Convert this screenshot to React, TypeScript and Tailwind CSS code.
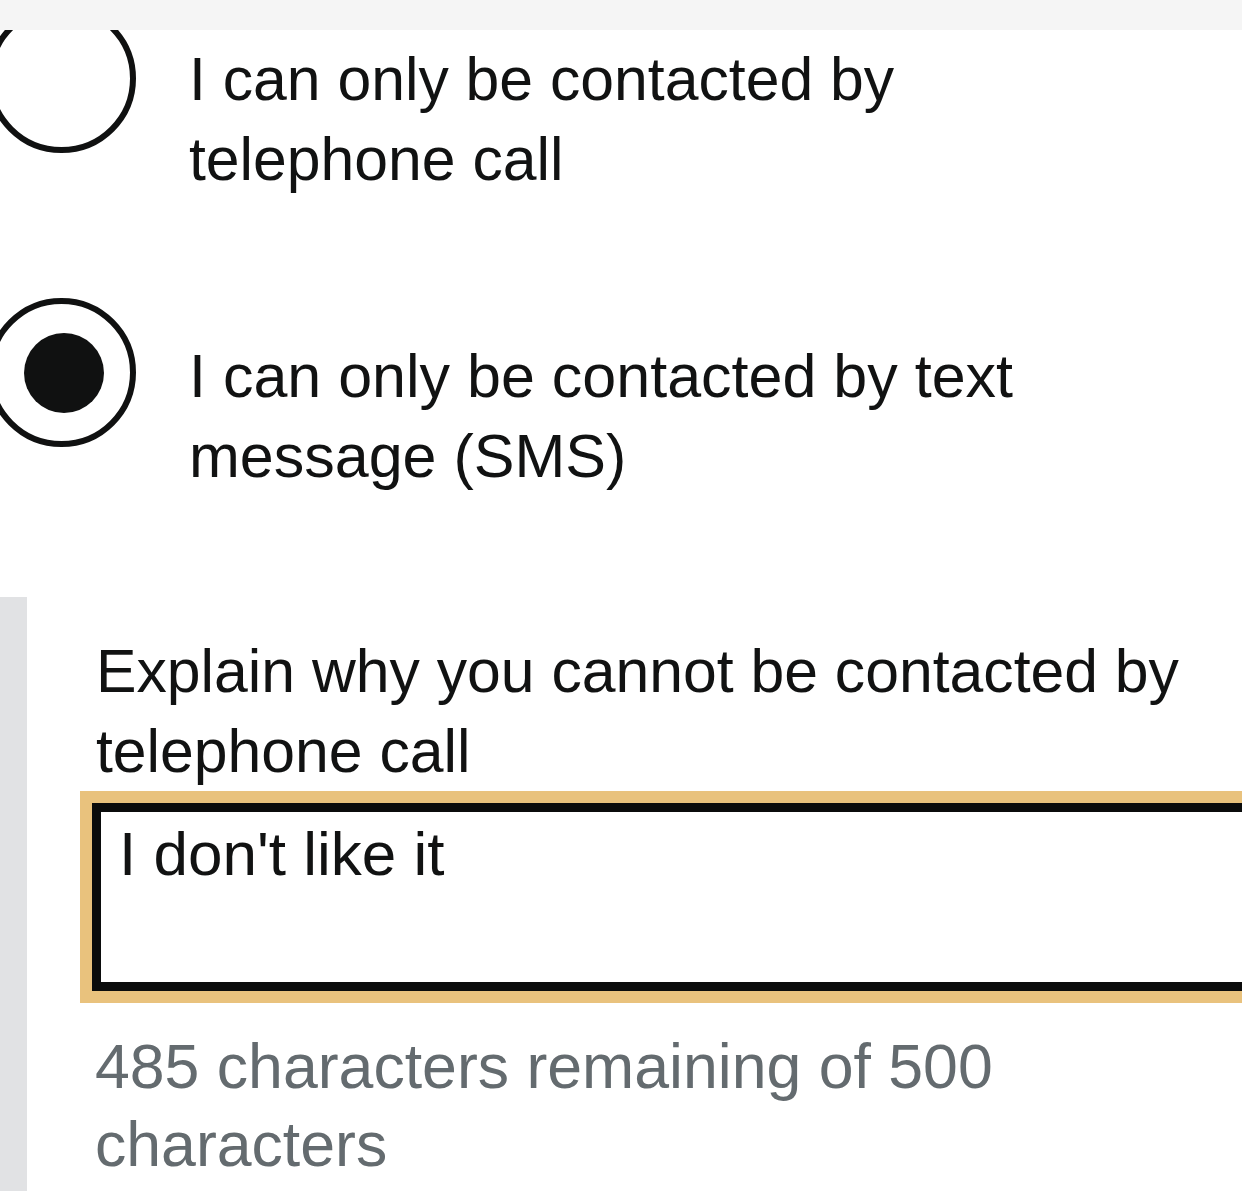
import React from "react";

const font = { fontFamily: '"Liberation Sans", Arial, sans-serif' };

function Radio({ checked }: { checked?: boolean }) {
  return (
    <div className="ml-[-13px] flex h-[149px] w-[149px] shrink-0 items-center justify-center rounded-full border-[6px] border-[#101111] bg-white">
      {checked ? <div className="ml-[5px] h-[80px] w-[80px] rounded-full bg-[#101111]" /> : null}
    </div>
  );
}

export default function App() {
  return (
    <div
      className="relative flex h-[1191px] w-[1242px] flex-col overflow-hidden bg-white text-[#111212]"
      style={font}
    >
      <div className="h-[30px] shrink-0 bg-[#f5f5f5]" />
      <div className="flex flex-col overflow-hidden">
        <div className="flex items-start">
          <div className="mt-[-26px]">
            <Radio />
          </div>
          <div className="ml-[53px] mt-[9px] text-[60.7px] leading-[80px]">
            I can only be contacted by
            <br />
            telephone call
          </div>
        </div>
        <div className="mt-[99px] flex items-start">
          <Radio checked />
          <div className="ml-[53px] mt-[38px] text-[61px] leading-[80px]">
            I can only be contacted by text
            <br />
            message (SMS)
          </div>
        </div>
      </div>
      <div className="mt-[101px] flex flex-1 border-l-[27px] border-[#e1e2e4] pl-[65px] pt-[34px]">
        <div className="flex flex-col">
          <label className="ml-[4px] text-[60.7px] leading-[80px]">
            Explain why you cannot be contacted by
            <br />
            telephone call
          </label>
          <textarea
            readOnly
            value="I don't like it"
            className="mt-[12px] h-[188px] w-[1200px] resize-none border-[9px] border-[#0b0c0c] bg-white pl-[18px] pt-[3px] text-[62px] leading-[78px] text-[#111212] shadow-[0_0_0_12px_#e9c27d] outline-none"
            style={font}
          />
          <div className="ml-[3px] mt-[36px] text-[62.6px] leading-[78px] text-[#646b6f]">
            485 characters remaining of 500
            <br />
            characters
          </div>
        </div>
      </div>
    </div>
  );
}
